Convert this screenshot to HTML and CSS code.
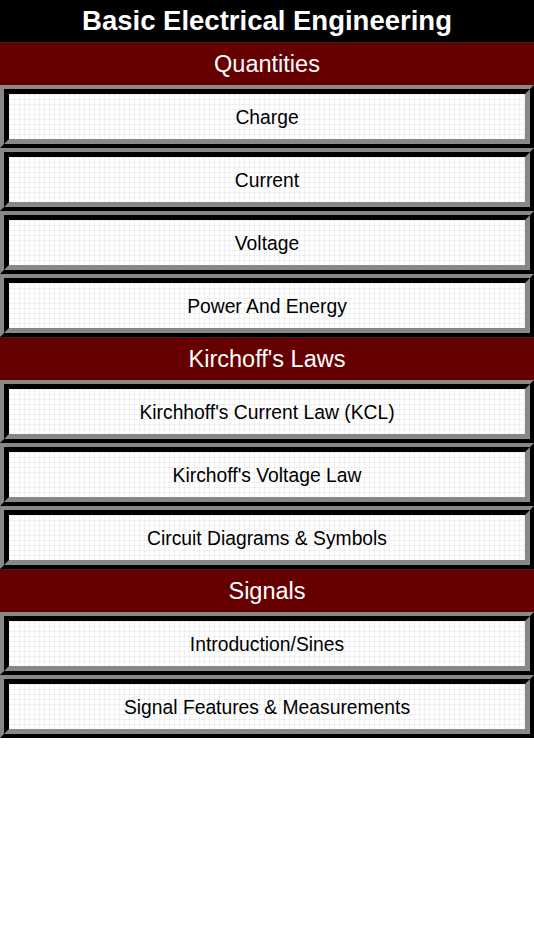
FILE: index.html
```html
<!DOCTYPE html>
<html>
<head>
<meta charset="utf-8">
<link rel="stylesheet" href="styles.css">
</head>
<body>
<div class="page">
  <header class="title">Basic Electrical Engineering</header>

  <h2 class="section-head">Quantities</h2>
  <div class="item"><div class="item-inner">Charge</div></div>
  <div class="item"><div class="item-inner">Current</div></div>
  <div class="item"><div class="item-inner">Voltage</div></div>
  <div class="item"><div class="item-inner">Power And Energy</div></div>

  <h2 class="section-head">Kirchoff's Laws</h2>
  <div class="item"><div class="item-inner">Kirchhoff's Current Law (KCL)</div></div>
  <div class="item"><div class="item-inner">Kirchoff's Voltage Law</div></div>
  <div class="item"><div class="item-inner">Circuit Diagrams &amp; Symbols</div></div>

  <h2 class="section-head">Signals</h2>
  <div class="item"><div class="item-inner">Introduction/Sines</div></div>
  <div class="item"><div class="item-inner">Signal Features &amp; Measurements</div></div>
</div>
</body>
</html>
```

FILE: styles.css
```css
html, body {
  margin: 0;
  padding: 0;
  background: #ffffff;
}

.page {
  width: 534px;
  font-family: "Liberation Sans", Arial, sans-serif;
}

.title {
  height: 42px;
  background: #000000;
  color: #ffffff;
  font-weight: bold;
  font-size: 27.5px;
  display: flex;
  align-items: center;
  justify-content: center;
  box-sizing: border-box;
  padding-bottom: 1px;
}

.section-head {
  margin: 0;
  height: 43px;
  box-sizing: border-box;
  background: #660000;
  border-top: 1px solid #3a2020;
  color: #ffffff;
  font-weight: normal;
  font-size: 23.5px;
  display: flex;
  align-items: center;
  justify-content: center;
}

.item {
  border-style: solid;
  border-width: 4px;
  border-color: #888888 #000000 #000000 #888888;
}

.item-inner {
  border-style: solid;
  border-width: 5px;
  border-color: #000000 #888888 #888888 #000000;
  display: flex;
  align-items: center;
  justify-content: center;
  padding-top: 3px;
  box-sizing: content-box;
  height: 42px;
  font-size: 19.3px;
  color: #000000;
  background-color: #ffffff;
  background-image:
    repeating-linear-gradient(to right, rgba(0,0,0,0.05) 0 1px, transparent 1px 5px),
    repeating-linear-gradient(to bottom, rgba(0,0,0,0.05) 0 1px, transparent 1px 5px);
}
```
